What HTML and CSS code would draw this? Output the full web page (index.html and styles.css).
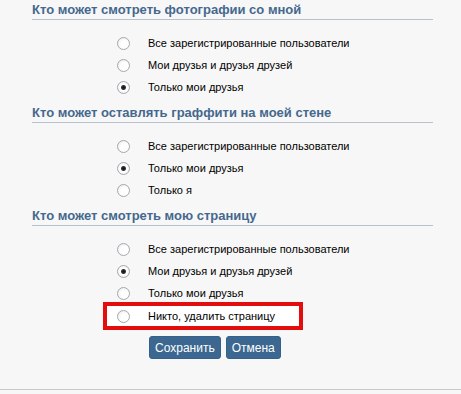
FILE: index.html
```html
<!DOCTYPE html>
<html>
<head>
    <title>Приватность</title>
    <link rel="stylesheet" href="styles.css">
</head>
<body>
    <div class="page">
        <div class="section">
            <h2>Кто может смотреть фотографии со мной</h2>
            <div class="options">
                <label class="option"><input type="radio" name="photos"> Все зарегистрированные пользователи</label>
                <label class="option"><input type="radio" name="photos"> Мои друзья и друзья друзей</label>
                <label class="option"><input type="radio" name="photos" checked> Только мои друзья</label>
            </div>
        </div>

        <div class="section">
            <h2>Кто может оставлять граффити на моей стене</h2>
            <div class="options">
                <label class="option"><input type="radio" name="graffiti"> Все зарегистрированные пользователи</label>
                <label class="option"><input type="radio" name="graffiti" checked> Только мои друзья</label>
                <label class="option"><input type="radio" name="graffiti"> Только я</label>
            </div>
        </div>

        <div class="section">
            <h2>Кто может смотреть мою страницу</h2>
            <div class="options">
                <label class="option"><input type="radio" name="page"> Все зарегистрированные пользователи</label>
                <label class="option"><input type="radio" name="page" checked> Мои друзья и друзья друзей</label>
                <label class="option"><input type="radio" name="page"> Только мои друзья</label>
                <label class="option marked"><input type="radio" name="page"> Никто, удалить страницу</label>
            </div>
        </div>

        <div class="buttons">
            <button type="submit">Сохранить</button>
            <button type="button">Отмена</button>
        </div>
    </div>
</body>
</html>
```

FILE: styles.css
```css
body { margin: 0; background: #f7f7f7; font-family: "Liberation Sans", Arial, sans-serif; }
.page { height: 390px; border-bottom: 1px solid #c9c9c9; box-sizing: border-box; }
.section h2 { margin: 0 0 0 32px; width: 401px; height: 19px; line-height: 19px; font-size: 13px; font-weight: bold; color: #45688e; border-bottom: 1px solid #b8c2ce; }
.options { padding: 12px 0 5px 105px; }
.option { display: flex; align-items: center; gap: 18px; width: 184px; height: 22px; padding-left: 12px; font-size: 11px; color: #000; white-space: nowrap; }
.option.marked { height: 24px; background: #fff; outline: 4px solid #e30d0d; outline-offset: -2px; }
input[type=radio] { appearance: none; margin: 0; width: 13px; height: 13px; border: 1px solid #a4a8ad; border-radius: 50%; background: radial-gradient(circle at 60% 60%, #ffffff 40%, #e6e6e6 100%); box-sizing: border-box; flex: none; }
input[type=radio]:checked { background: radial-gradient(circle at 50% 50%, #111 0, #333 2px, #fff 3px, #ffffff 45%, #e6e6e6 100%); }
.buttons { display: flex; gap: 5px; padding: 3px 0 0 149px; }
button { height: 23px; padding: 0 5px; background: #3b6790; color: #fff; border: 1px solid #34608a; border-radius: 3px; font-family: "Liberation Sans", Arial, sans-serif; font-size: 12px; }
```
